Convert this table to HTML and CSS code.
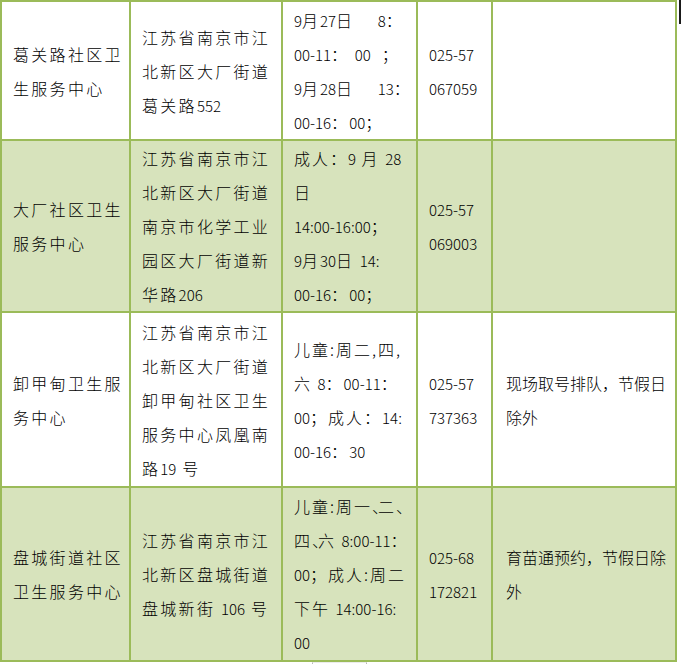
FILE: index.html
```html
<!DOCTYPE html>
<html lang="zh-CN">
<head>
<meta charset="utf-8">
<title>接种点</title>
<link rel="stylesheet" href="styles.css">
</head>
<body>
<div class="page">
  <div class="edge-mark"></div>
  <table class="sites">
    <colgroup>
      <col class="w1"><col class="w2"><col class="w3"><col class="w4"><col class="w5">
    </colgroup>
    <tbody>
      <tr class="r1">
        <td class="c1">葛关路社区卫<br>生服务中心</td>
        <td class="c2">江苏省南京市江<br>北新区大厂街道<br>葛关路<span class="n">552</span></td>
        <td class="c3"><span class="n">9</span>月<span class="n">27</span>日　 <span class="n">8</span>：<br><span class="n">00-11</span>： <span class="n">00</span> &nbsp;；<br><span class="n">9</span>月<span class="n">28</span>日　 <span class="n">13</span>：<br><span class="n">00-16</span>：<span class="n">00</span>；</td>
        <td class="c4"><span class="n">025-57</span><br><span class="n">067059</span></td>
        <td class="c5"></td>
      </tr>
      <tr class="r2 alt">
        <td class="c1">大厂社区卫生<br>服务中心</td>
        <td class="c2">江苏省南京市江<br>北新区大厂街道<br>南京市化学工业<br>园区大厂街道新<br>华路<span class="n">206</span></td>
        <td class="c3">成人：<span class="n">9</span> 月 <span class="n">28</span><br>日<br><span class="n">14:00-16:00</span>；<br><span class="n">9</span>月<span class="n">30</span>日 <span class="n">14:</span><br><span class="n">00-16</span>：<span class="n">00</span>；</td>
        <td class="c4"><span class="n">025-57</span><br><span class="n">069003</span></td>
        <td class="c5"></td>
      </tr>
      <tr class="r3">
        <td class="c1">卸甲甸卫生服<br>务中心</td>
        <td class="c2">江苏省南京市江<br>北新区大厂街道<br>卸甲甸社区卫生<br>服务中心凤凰南<br>路<span class="n">19</span> 号</td>
        <td class="c3">儿童:周二,四,<br>六 <span class="n">8</span>：<span class="n">00-11</span>：<br><span class="n">00</span>；成人：<span class="n">14:</span><br><span class="n">00-16</span>：<span class="n">30</span></td>
        <td class="c4"><span class="n">025-57</span><br><span class="n">737363</span></td>
        <td class="c5">现场取号排队，节假日<br>除外</td>
      </tr>
      <tr class="r4 alt">
        <td class="c1">盘城街道社区<br>卫生服务中心</td>
        <td class="c2">江苏省南京市江<br>北新区盘城街道<br>盘城新街 <span class="n">106</span> 号</td>
        <td class="c3">儿童:周一<span class="h">、</span>二<span class="h">、</span><br>四<span class="h">、</span>六 <span class="n">8:00-11</span>：<br><span class="n">00</span>；成人:周二<br>下午 <span class="n">14:00-16:</span><br><span class="n">00</span></td>
        <td class="c4"><span class="n">025-68</span><br><span class="n">172821</span></td>
        <td class="c5">育苗通预约，节假日除<br>外</td>
      </tr>
    </tbody>
  </table>
  <div class="below-tab"></div>
</div>
</body>
</html>
```

FILE: styles.css
```css
html, body {
  margin: 0;
  padding: 0;
  background: #ffffff;
}

.page {
  position: relative;
  width: 681px;
  height: 664px;
  overflow: hidden;
}

.sites {
  border-collapse: collapse;
  table-layout: fixed;
  width: 677px;
  font-family: "Noto Sans CJK SC", "Noto Sans", sans-serif;
  font-size: 16px;
  font-weight: 300;
  line-height: 34px;
  color: #000000;
}

.w1 { width: 129px; }
.w2 { width: 152px; }
.w3 { width: 135px; }
.w4 { width: 75px; }
.w5 { width: 184px; }

.sites td {
  border: 2px solid #9bbb59;
  padding: 0 0 0 11px;
  vertical-align: middle;
  white-space: nowrap;
  overflow: hidden;
  letter-spacing: 2px;
}

.sites .alt td {
  background: #d7e3bc;
}

.r1 { height: 139px; }
.r2 { height: 172px; }
.r3 { height: 175px; }
.r4 { height: 174px; }

.sites td.c1,
.sites td.c2 {
  letter-spacing: 2.3px;
}

.sites td.c4 {
  padding-left: 11px;
}

.sites td.c5 {
  padding-left: 13px;
  letter-spacing: 0;
}

.n {
  font-size: 15px;
  line-height: 16px;
  letter-spacing: 0;
}

.h {
  letter-spacing: -10px;
}

.edge-mark {
  position: absolute;
  top: 0;
  left: 679px;
  width: 2px;
  height: 24px;
  background: #1a1a1a;
}

.below-tab {
  margin-left: 312px;
  width: 53px;
  height: 6px;
  border: 1px solid #b8b8b8;
  border-bottom: none;
  border-top-color: #ececec;
}
```
